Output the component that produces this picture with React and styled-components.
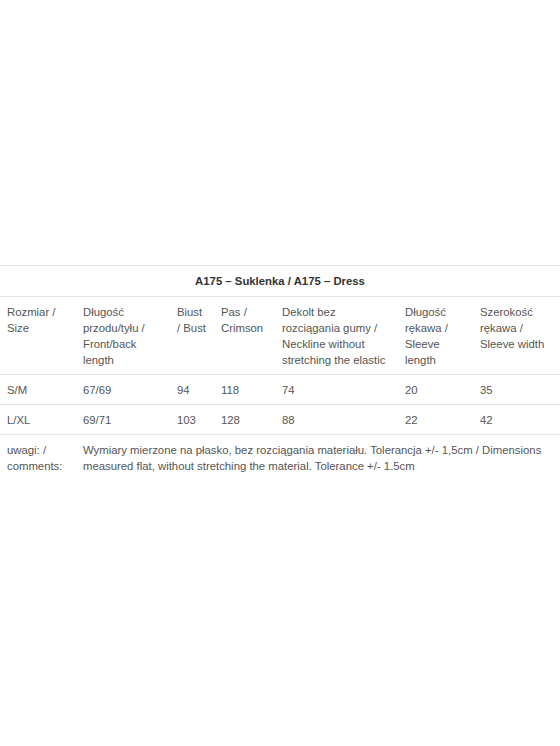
import React from "react";
import styled, { createGlobalStyle } from "styled-components";

const Global = createGlobalStyle`
  html, body { margin: 0; padding: 0; background: #fff; }
  body { font-family: "Liberation Sans", Arial, sans-serif; }
`;

const Page = styled.div`
  box-sizing: border-box;
  min-height: 746px;
  padding-bottom: 2px;
  display: flex;
  align-items: center;
  justify-content: center;
`;

const Table = styled.table`
  width: 560px;
  border-collapse: collapse;
  table-layout: fixed;
  font-size: 11.35px;
  line-height: 16px;
  color: #555;
`;

const Caption = styled.th`
  border-top: 1px solid #e6e6e6;
  border-bottom: 1px solid #e6e6e6;
  padding: 7px 7px 7px;
  font-weight: bold;
  color: #333;
  text-align: center;
`;

const Cell = styled.td`
  padding: 7px 7px 6px;
  vertical-align: top;
  text-align: left;
  border-bottom: ${(p) => (p.$last ? "none" : "1px solid #e6e6e6")};
`;

const widths = [76, 94, 44, 61, 123, 75, 87];

const header = [
  "Rozmiar / Size",
  "Długość przodu/tyłu / Front/back length",
  "Biust / Bust",
  "Pas / Crimson",
  "Dekolt bez rozciągania gumy / Neckline without stretching the elastic",
  "Długość rękawa / Sleeve length",
  "Szerokość rękawa / Sleeve width",
];

const rows = [
  ["S/M", "67/69", "94", "118", "74", "20", "35"],
  ["L/XL", "69/71", "103", "128", "88", "22", "42"],
];

export default function App() {
  return (
    <>
      <Global />
      <Page>
        <Table>
          <colgroup>
            {widths.map((w, i) => (
              <col key={i} style={{ width: w }} />
            ))}
          </colgroup>
          <thead>
            <tr>
              <Caption colSpan={7}>A175 – Suklenka / A175 – Dress</Caption>
            </tr>
          </thead>
          <tbody>
            <tr>
              {header.map((h, i) => (
                <Cell key={i}>{h}</Cell>
              ))}
            </tr>
            {rows.map((r, ri) => (
              <tr key={ri}>
                {r.map((c, ci) => (
                  <Cell key={ci}>{c}</Cell>
                ))}
              </tr>
            ))}
            <tr>
              <Cell $last>uwagi: / comments:</Cell>
              <Cell $last colSpan={6}>
                Wymiary mierzone na płasko, bez rozciągania materiału. Tolerancja +/- 1,5cm / Dimensions measured flat, without stretching the material. Tolerance +/- 1.5cm
              </Cell>
            </tr>
          </tbody>
        </Table>
      </Page>
    </>
  );
}
